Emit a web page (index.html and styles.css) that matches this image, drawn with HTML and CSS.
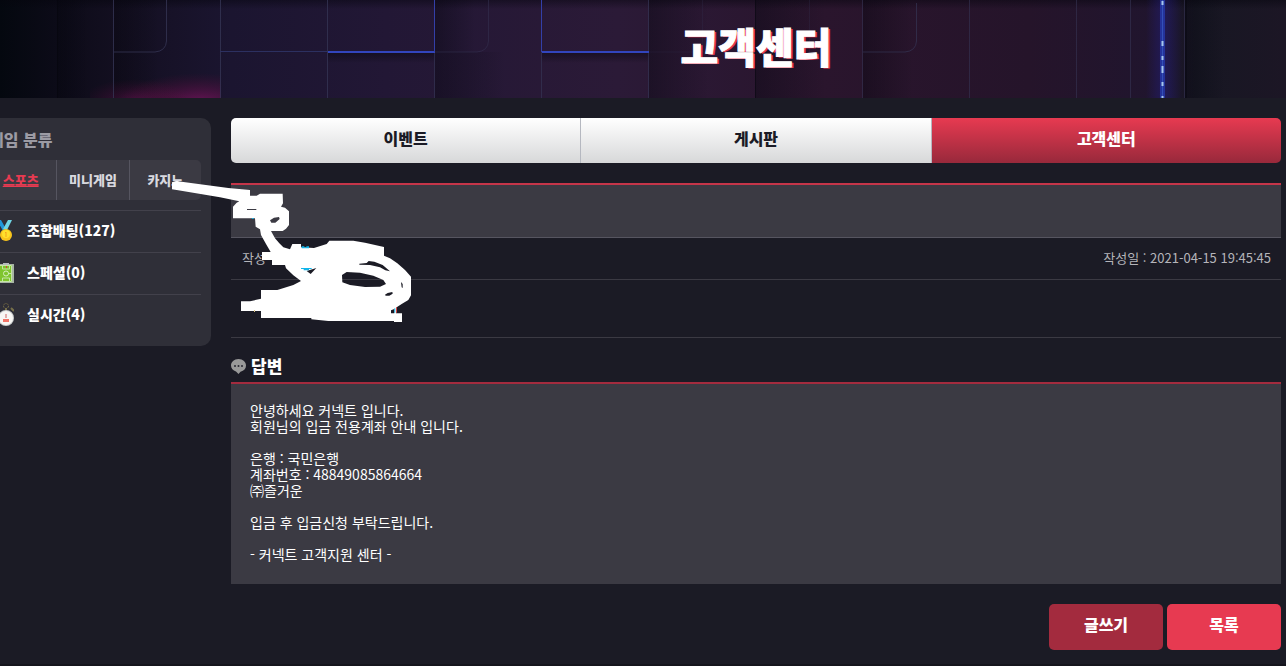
FILE: index.html
```
<!DOCTYPE html>
<html lang="ko">
<head>
    <meta charset="UTF-8">
    <meta name="viewport" content="width=device-width, initial-scale=1.0">
    <title>고객센터</title>
    <link rel="stylesheet" href="styles.css">
</head>
<body>

    <header class="banner">
        <svg class="banner-bg" viewBox="0 0 1286 98" preserveAspectRatio="xMidYMid slice" aria-hidden="true">
            <defs>
                <linearGradient id="base">
                    <stop offset="0" stop-color="#04080f"/>
                    <stop offset=".045" stop-color="#0c0b18"/>
                    <stop offset=".09" stop-color="#130f20"/>
                    <stop offset=".18" stop-color="#1b1530"/>
                    <stop offset=".3" stop-color="#221735"/>
                    <stop offset=".48" stop-color="#2b1a37"/>
                    <stop offset=".64" stop-color="#2a152d"/>
                    <stop offset=".8" stop-color="#25142a"/>
                    <stop offset=".9" stop-color="#20152e"/>
                    <stop offset=".93" stop-color="#171723"/>
                    <stop offset="1" stop-color="#1c1625"/>
                </linearGradient>
                <linearGradient id="side">
                    <stop offset="0" stop-color="#05050d" stop-opacity=".38"/>
                    <stop offset="1" stop-color="#05050d" stop-opacity="0"/>
                </linearGradient>
                <linearGradient id="down" x2="0" y2="1">
                    <stop offset="0" stop-color="#05050d" stop-opacity=".45"/>
                    <stop offset="1" stop-color="#05050d" stop-opacity="0"/>
                </linearGradient>
                <linearGradient id="glow">
                    <stop offset="0" stop-color="#24209a" stop-opacity="0"/>
                    <stop offset=".5" stop-color="#24209a" stop-opacity=".4"/>
                    <stop offset="1" stop-color="#24209a" stop-opacity="0"/>
                </linearGradient>
                <radialGradient id="pink">
                    <stop offset="0" stop-color="#7a1460" stop-opacity=".75"/>
                    <stop offset="1" stop-color="#5a0c35" stop-opacity="0"/>
                </radialGradient>
                <clipPath id="panel">
                    <rect x="90" width="131" height="98"/>
                </clipPath>
            </defs>
            <rect width="1286" height="98" fill="url(#base)"/>
            <!-- panel shading -->
            <rect x="58" width="30" height="98" fill="url(#side)"/>
            <rect x="114" width="45" height="98" fill="url(#side)"/>
            <rect x="435" y="52" width="70" height="46" fill="url(#side)"/>
            <rect x="435" width="40" height="52" fill="url(#side)"/>
            <rect x="649" width="60" height="98" fill="url(#side)"/>
            <rect x="756" width="70" height="98" fill="url(#side)"/>
            <rect x="863" width="50" height="98" fill="url(#side)"/>
            <rect x="1185" width="40" height="98" fill="url(#side)"/>
            <rect width="1286" height="9" fill="url(#down)"/>
            <rect x="328" y="53" width="107" height="10" fill="url(#down)"/>
            <rect x="542" y="53" width="107" height="10" fill="url(#down)"/>
            <g clip-path="url(#panel)">
                <ellipse cx="200" cy="101" rx="80" ry="28" fill="url(#pink)"/>
                <ellipse cx="135" cy="101" rx="55" ry="22" fill="url(#pink)" opacity=".6"/>
            </g>
            <!-- panel seams -->
            <g fill="none" stroke="#353454">
                <path d="M113.500 0V98M220.500 0V98M327.500 0V98" opacity=".8"/>
                <path d="M166.500 0V41Q166 51 155 52H114" opacity=".8"/>
                <path d="M220 51.500H328" stroke="#2c3060"/>
                <path d="M434.500 52V98M541.500 52V98M648.500 0V98" opacity=".7"/>
                <path d="M488.500 0V41Q488 51 477 52H435" opacity=".5"/>
                <path d="M649 52H756M702.500 0V52M809.500 0V52" opacity=".25"/>
                <path d="M862.500 0V98M969.500 0V98M1076.500 0V98M1130.500 0V98M1184.500 0V98" opacity=".6"/>
                <path d="M916.500 3V41Q916 51 905 52H863" opacity=".7"/>
            </g>
            <path d="M57.500 0V98M755.500 0V98M1186 0V98" stroke="#06060e" opacity=".7"/>
            <path d="M328 52H435M542 52H649" stroke="#3245bd" stroke-width="2"/>
            <path d="M434.500 0V52M541.500 0V52" stroke="#333fa8"/>
            <!-- light strip -->
            <rect x="1146" width="36" height="98" fill="url(#glow)"/>
            <rect x="1160" width="5" height="98" fill="#24329b"/>
            <path d="M1162.500 0V98" stroke="#3450b8"/>
            <path d="M1162.500 1V5M1162.500 41V46M1162.500 56V60M1162.500 66V73M1162.500 82V86M1162.500 96V98" stroke="#a5c7f0" stroke-width="2"/>
        </svg>
        <h1>고객센터</h1>
    </header>

    <div class="container">
        <aside class="sidebar">
            <h2>게임 분류</h2>
            <nav class="game-tabs">
                <a href="#" class="active">스포츠</a>
                <a href="#">미니게임</a>
                <a href="#">카지노</a>
            </nav>
            <ul class="game-list">
                <li><a href="#">
                    <svg class="game-icon" viewBox="0 0 20 24" aria-hidden="true">
                        <path d="M3 1h4l5 9-3 2z" fill="#2098da"/>
                        <path d="M14 1h4l-5 10-4-1z" fill="#70d5e5"/>
                        <circle cx="12" cy="16" r="6" fill="#f9c51c"/>
                        <circle cx="12" cy="15" r="4" fill="#ffe12c"/>
                        <path d="M11 14l1-1v5" fill="none" stroke="#f5a31c"/>
                    </svg>
                    조합배팅(127)
                </a></li>
                <li><a href="#">
                    <svg class="game-icon" viewBox="0 0 20 24" aria-hidden="true">
                        <path d="M0 3h20v19H0z" fill="#a8b5a5"/>
                        <path d="M1 4h17v17H1z" fill="#7fc52d"/>
                        <path d="M2.500 4.500h15v16h-15zM2 12.500h4M14 12.500h4M8.500 5v3h7V5M8.500 20v-3h7v3" fill="none" stroke="#c5e5a5"/>
                        <circle cx="12" cy="12.500" r="2.500" fill="none" stroke="#d5efbd"/>
                        <path d="M9 2h6v2H9z" fill="#b5b8bd"/>
                        <path d="M12 5h1v2h-1z" fill="#d64040"/>
                    </svg>
                    스페셜(0)
                </a></li>
                <li><a href="#">
                    <svg class="game-icon" viewBox="0 0 20 24" aria-hidden="true">
                        <circle cx="12" cy="3" r="2.500" fill="none" stroke="#776d45" stroke-dasharray="2 1"/>
                        <path d="M12 5v3M17 5l3 3" stroke="#77704a" stroke-width="2"/>
                        <circle cx="12" cy="15" r="8" fill="#c9cccd"/>
                        <circle cx="12" cy="15" r="7" fill="#f8f7f5"/>
                        <path d="M12 11v4" stroke="#c66"/>
                        <path d="M9 16h6v3H9z" fill="#f27468"/>
                    </svg>
                    실시간(4)
                </a></li>
            </ul>
        </aside>

        <main class="content">
            <nav class="board-tabs">
                <a href="#">이벤트</a>
                <a href="#">게시판</a>
                <a href="#" class="active">고객센터</a>
            </nav>

            <article class="post">
                <div class="post-title"></div>
                <div class="post-info">
                    <span>작성</span>
                    <span>작성일 : 2021-04-15 19:45:45</span>
                </div>
                <div class="post-body"></div>
            </article>

            <section class="answer">
                <h3>
                    <svg class="bubble" viewBox="0 0 15 15" aria-hidden="true">
                        <path d="M7.500 0C3 0 0 3 0 6.500c0 3 2 5 5 6L7.500 15l2-2.300C13 12 15 9.500 15 6.500 15 3 12 0 7.500 0z" fill="#999"/>
                        <circle cx="4" cy="7" r="1" fill="#2a2a33"/>
                        <circle cx="7.500" cy="7" r="1" fill="#2a2a33"/>
                        <circle cx="11" cy="7" r="1" fill="#2a2a33"/>
                    </svg>
                    답변
                </h3>
                <div class="answer-body">
                    안녕하세요 커넥트 입니다.<br>
                    회원님의 입금 전용계좌 안내 입니다.<br>
                    <br>
                    은행 : 국민은행<br>
                    계좌번호 : 48849085864664<br>
                    ㈜즐거운<br>
                    <br>
                    입금 후 입금신청 부탁드립니다.<br>
                    <br>
                    - 커넥트 고객지원 센터 -
                </div>
            </section>

            <div class="buttons">
                <button type="button" class="btn btn-write">글쓰기</button>
                <button type="button" class="btn">목록</button>
            </div>
        </main>

        <!-- brush marks over the private fields -->
        <svg class="scribble" viewBox="0 0 810 510" aria-hidden="true">
            <path fill="#fff" fill-rule="evenodd" d="M36 37L48 33L205 54L270 60V77H290L300 71H368L369 100L363 110L375 113L387 124V165L378 176L368 183H333L345 205L358 220L370 232L390 238L397 222H423V232L462 234L500 222L508 212H580L615 218L672 231V257L690 265L712 280L735 300L753 320V376L745 390L725 402L710 412L708 430H726V456H702V453H505L454 448V444H303V423H243V394H270L303 386V360H352L400 345L423 333L400 316L378 295L375 285H336V270H306V246H332L318 222L303 195L300 178L287 170L285 145H219V110L230 98L238 94L180 82L50 60L36 58Z
                M261 117H289V120H261Z
                M330 151L342 143L357 141L359 147L346 158L334 158Z
                M546 315L560 306L600 308L640 317L670 330L678 342L660 350L615 351L570 345L547 337Z
                M598 281L620 279L626 273L643 275L668 285L690 304L676 301L660 292L630 285L598 284Z
                M440 303L469 294L452 312Z
                M675 374L683 369L697 366L698 371L688 377L677 377Z
                M723 336L728 342V354L725 352Z
                M693 421L703 417V430H693Z"/>
            <path fill="#12b5ea" d="M425 229h8v3h6v-3h8v6h-22zM423 294h32v3h-8v4h-16v-4h-8zM276 144h5v3h-5zM703 415h3v13h-3z"/>
            <path fill="#d84545" d="M708 412h3v16h-3z"/>
            <path fill="#d9c58a" d="M282 420h3v6h-3z"/>
        </svg>
    </div>

    <footer class="footer"></footer>

</body>
</html>
```

FILE: styles.css
```
* {
    margin: 0;
    padding: 0;
    box-sizing: border-box;
}
body {
    background: #1b1b25;
    color: white;
    font-family: "Noto Sans CJK KR", sans-serif;
    font-size: 14px;
    overflow-x: hidden;
}
a {
    color: inherit;
    text-decoration: none;
}
ul {
    list-style: none;
}

/* banner */
.banner {
    position: relative;
    height: 98px;
    padding: 0 5px 0 231px;
    overflow: hidden;
}
.banner-bg {
    position: absolute;
    top: 0;
    left: 0;
    width: 100%;
    height: 100%;
}
.banner h1 {
    position: relative;
    font-size: 41px;
    font-weight: 900;
    line-height: 90px;
    text-align: center;
    text-shadow: 2px 1px 0 #e73a51;
    -webkit-text-stroke: 1px white;
}

.container {
    position: relative;
    display: flex;
    align-items: flex-start;
    gap: 20px;
    padding: 20px 5px 0 0;
}

/* sidebar, runs past the left edge */
.sidebar {
    flex: none;
    width: 236px;
    margin-left: -25px;
    padding: 0 10px 10px;
    background: #2f2f38;
    border-radius: 10px;
}
.sidebar h2 {
    padding-left: 4px;
    color: #9c9ba4;
    font-size: 16px;
    font-weight: 900;
    line-height: 42px;
}
.game-tabs {
    display: flex;
    margin-bottom: 10px;
    background: #3b3a43;
    border-radius: 5px;
}
.game-tabs a {
    flex: 1;
    color: #d8d8df;
    font-size: 13px;
    font-weight: 900;
    line-height: 40px;
    text-align: center;
}
.game-tabs a + a {
    border-left: 1px solid #565560;
}
.game-tabs .active {
    color: #e73a51;
    text-decoration: underline;
}
.game-list li {
    border-top: 1px solid #42414b;
}
.game-list a {
    display: flex;
    align-items: center;
    gap: 13px;
    padding-left: 9px;
    padding-bottom: 2px;
    font-weight: 900;
    line-height: 39px;
}
.game-icon {
    width: 20px;
    height: 24px;
}

/* board */
.content {
    flex: 1;
    min-width: 0;
}
.board-tabs {
    display: flex;
    border-radius: 5px;
    overflow: hidden;
    margin-bottom: 20px;
}
.board-tabs a {
    flex: 1;
    background: linear-gradient(#fff, #d7d8d9);
    color: #1b1b25;
    font-size: 16px;
    font-weight: 900;
    line-height: 40px;
    padding-bottom: 5px;
    text-align: center;
    border-right: 1px solid #b5b8c0;
}
.board-tabs .active {
    background: linear-gradient(#e73a51, #98293b);
    color: white;
    border-right: none;
}
.post-title {
    height: 55px;
    background: #3b3a43;
    border-top: 2px solid #c53549;
    border-bottom: 1px solid #565560;
}
.post-info {
    display: flex;
    justify-content: space-between;
    padding: 0 10px 2px 11px;
    color: #b5b5ba;
    font-size: 13px;
    line-height: 39px;
    border-bottom: 1px solid #3b3a43;
}
.post-body {
    min-height: 58px;
    border-bottom: 1px solid #3b3a43;
}
.answer h3 {
    display: flex;
    align-items: center;
    gap: 5px;
    padding-top: 12px;
    font-size: 17px;
    font-weight: 900;
    line-height: 32px;
}
.bubble {
    width: 15px;
    height: 15px;
}
.answer-body {
    padding: 18px 19px 22px;
    background: #3b3a43;
    border-top: 2px solid #a32b3e;
    line-height: 16px;
}
.buttons {
    display: flex;
    justify-content: flex-end;
    gap: 4px;
    margin-top: 20px;
}
.btn {
    width: 114px;
    height: 46px;
    padding-bottom: 6px;
    background: #e73a51;
    color: white;
    border: none;
    border-radius: 5px;
    font-family: inherit;
    font-size: 16px;
    font-weight: 900;
    cursor: pointer;
}
.btn-write {
    background: #a32b3e;
}

.scribble {
    position: absolute;
    top: 72px;
    left: 160px;
    width: 270px;
    height: 170px;
    pointer-events: none;
}

.footer {
    margin-top: 14px;
    border-top: 2px solid #15151d;
}
```
